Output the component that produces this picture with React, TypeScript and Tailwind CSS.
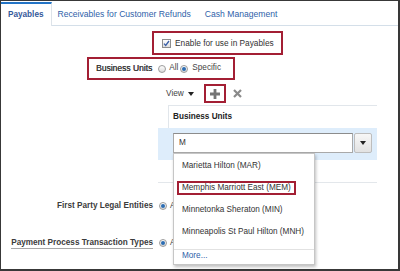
import React from 'react';

const font = "font-['Liberation_Sans',Arial,sans-serif]";

function Radio({ checked = false }: { checked?: boolean }) {
  return (
    <span className="flex h-[8px] w-[8px] shrink-0 items-center justify-center rounded-full border border-[#9c9c9c] bg-gradient-to-b from-[#ffffff] to-[#d9d9d9]">
      {checked && <span className="h-[4px] w-[4px] rounded-full bg-[#2c6db3]" />}
    </span>
  );
}

function Caret({ className = '' }: { className?: string }) {
  return (
    <svg width="6" height="4" viewBox="0 0 6 4" className={className}>
      <path d="M0 0h6L3 4z" fill="#222" />
    </svg>
  );
}

const items = [
  'Marietta Hilton (MAR)',
  'Memphis Marriott East (MEM)',
  'Minnetonka Sheraton (MIN)',
  'Minneapolis St Paul Hilton (MNH)'
];

export default function App() {
  return (
    <div
      className={`relative h-[271px] w-[400px] overflow-hidden border-t border-l border-r-2 border-b-2 border-[#383838] bg-white ${font}`}
    >
      {/* Tabs */}
      <div className="flex h-[25px] items-end border-b border-[#d4dfe9]">
        <div className="relative -mb-px flex h-[24px] items-center border-t-2 border-r border-t-[#2374c6] border-r-[#dde3e9] bg-white px-[7px] text-[8.2px] font-bold text-[#34589a]">
          Payables
        </div>
        <div className="flex h-[24px] items-center pl-[6px] pr-[7px] pt-[2px] text-[8.6px] text-[#2f5fa9]">
          Receivables for Customer Refunds
        </div>
        <div className="flex h-[24px] items-center px-[7px] pt-[2px] text-[8.6px] text-[#2f5fa9]">
          Cash Management
        </div>
      </div>

      {/* Enable checkbox */}
      <div className="ml-[151px] mt-[5px] flex h-[24px] w-[131px] items-center border-2 border-[#a31f34] pl-[8px] text-[8.3px] text-[#333]">
        <span className="flex h-[9px] w-[9px] items-center justify-center border border-[#8e8e8e] bg-gradient-to-b from-white to-[#dedede]">
          <svg width="7" height="7" viewBox="0 0 7 7">
            <path d="M1 3.6l1.7 1.9L6 1" stroke="#3a5fa8" strokeWidth="1.3" fill="none" />
          </svg>
        </span>
        <span className="ml-[4px]">Enable for use in Payables</span>
      </div>

      {/* Business Units radio */}
      <div className="ml-[86px] mt-[2px] flex h-[23px] w-[148px] items-center border-2 border-[#a31f34] pl-[7px] text-[8.2px] text-[#444]">
        <span className="text-[8.5px] text-[#3a3a3a] [text-shadow:0.3px_0_0_#3a3a3a]">Business Units</span>
        <span className="ml-[6px]">
          <Radio />
        </span>
        <span className="ml-[3px]">All</span>
        <span className="ml-[2px]">
          <Radio checked />
        </span>
        <span className="ml-[4px]">Specific</span>
      </div>

      {/* Toolbar */}
      <div className="ml-[165px] mt-[4px] flex h-[19px] items-center text-[8.3px] text-[#444]">
        <span>View</span>
        <Caret className="ml-[4px]" />
        <span className="ml-[10px] flex h-[19px] w-[22px] items-center justify-center border-2 border-[#a31f34]">
          <svg width="10" height="10" viewBox="0 0 10 10">
            <path d="M5 0v10M0 5h10" stroke="#747474" strokeWidth="2.8" />
          </svg>
        </span>
        <span className="ml-[7px] flex items-center">
          <svg width="9" height="9" viewBox="0 0 9 9">
            <path d="M1 1l7 7M8 1L1 8" stroke="#8a8a8a" strokeWidth="2.2" />
          </svg>
        </span>
      </div>

      {/* Table */}
      <div className="ml-[157px] mt-[2px] w-[219px]">
        <div className="ml-[10px] flex h-[23px] items-center border-t border-l border-[#e1e6eb] pl-[4px] text-[8.2px] font-bold text-[#222]">
          Business Units
        </div>
        <div className="flex h-[32px] items-start bg-[#deedfb] pl-[15px] pt-[5px]">
          <div className="flex h-[20px] w-[180px] items-center border border-[#a9a9a9] border-t-[#8c8c8c] bg-white pl-[5px] text-[8.2px] text-[#333]">
            M
          </div>
          <div className="ml-[1px] flex h-[20px] w-[18px] items-center justify-center rounded-[2px] border border-[#bdbdbd] bg-gradient-to-b from-[#f7f7f7] to-[#e2e2e2]">
            <Caret />
          </div>
        </div>
        <div className="h-[23px] border-b border-[#e3e7eb]" />
      </div>

      {/* Other fields */}
      <div className="mt-[16px] flex h-[14px] items-center text-[8.2px]">
        <span className="w-[152px] text-right font-bold text-[#3c3c3c]">First Party Legal Entities</span>
        <span className="ml-[6px]">
          <Radio checked />
        </span>
        <span className="ml-[3px] text-[#444]">All</span>
      </div>
      <div className="mt-[23px] flex h-[14px] items-center text-[8.2px]">
        <span className="flex w-[152px] justify-end">
          <span className="border-b border-[#a8a8a8] font-bold leading-[10px] text-[#3c3c3c]">
            Payment Process Transaction Types
          </span>
        </span>
        <span className="ml-[6px]">
          <Radio checked />
        </span>
        <span className="ml-[3px] text-[#444]">All</span>
      </div>

      {/* Dropdown list */}
      <div className="absolute left-[172px] top-[152px] z-10 h-[112px] w-[142px] border border-[#c6c6c6] bg-white pt-[1px] text-[8.2px] text-[#333] shadow-[1px_2px_3px_rgba(0,0,0,0.25)]">
        {items.map((item, i) => (
          <div key={item} className="flex h-[22px] items-center pl-[8px]">
            {i === 1 ? (
              <span className="-ml-[5px] border-2 border-[#a31f34] px-[3px] leading-[10px]">{item}</span>
            ) : (
              item
            )}
          </div>
        ))}
        <div className="mt-[6px] flex h-[14px] items-center border-t border-[#e2e2e2] pl-[8px] text-[#2f5fa9]">
          More...
        </div>
      </div>
    </div>
  );
}
